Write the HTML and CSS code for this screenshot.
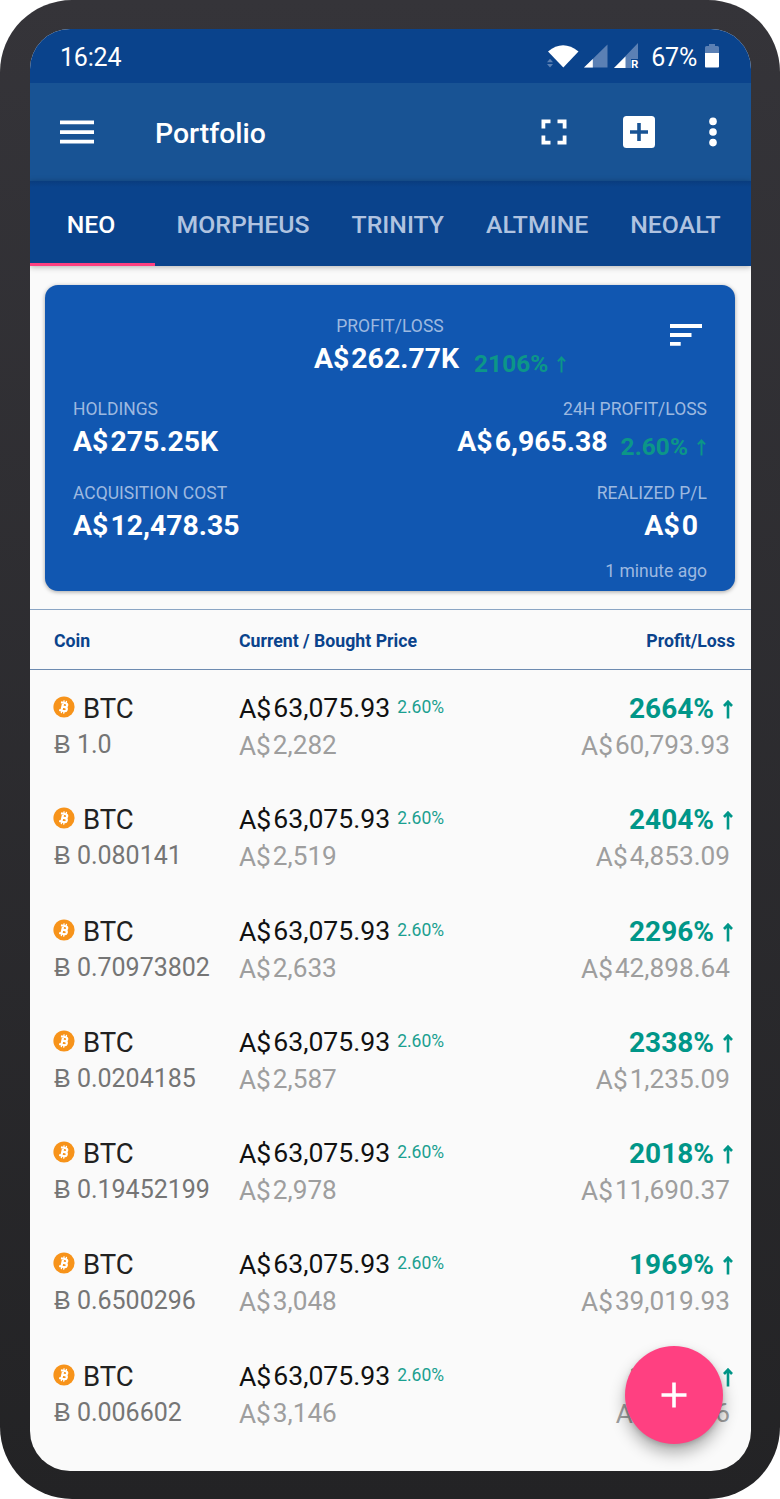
FILE: index.html
```html
<!DOCTYPE html>
<html lang="en">
<head>
<meta charset="UTF-8">
<meta name="viewport" content="width=device-width, initial-scale=1.0">
<title>Portfolio</title>
<link rel="stylesheet" href="styles.css">
</head>
<body>
<svg class="defs" width="0" height="0">
    <symbol id="btc" viewBox="0 0 22 22">
        <circle cx="11" cy="11" r="10.6" fill="#f7931a"/>
        <g transform="rotate(13 11 11)" fill="none" stroke="#fff">
            <path stroke-width="2.200" d="M7 7h4.800a1.900 1.900 0 0 1 0 3.900H9M7 15h5.200a2 2 0 0 0 0-4.100H9M9.300 7v8"/>
            <path stroke-width="1.300" d="M9.700 4.500V7M12.100 4.500V7M9.700 15v2.500M12.100 15v2.500"/>
        </g>
    </symbol>
    <symbol id="up" viewBox="0 0 10 19">
        <path d="M5 18.5V2M1 6l4-4.3L9 6" fill="none" stroke="currentColor"/>
    </symbol>
</svg>

<div class="phone">
<div class="screen">
    <div class="status">
        <span class="time">16:24</span>
        <svg class="wifi" width="32" height="24" viewBox="0 0 32 24">
            <path d="M1 7.500Q16 -5 31.500 7.500L16.300 23.500Z" fill="#fff"/>
            <path d="M0 18.200l3-3.500 3 3.500zM0 20l3 3.500L6 20z" fill="#5b80b4"/>
        </svg>
        <svg class="signal" width="24" height="26" viewBox="0 0 24 26">
            <path d="M0 24.500L23.500 1.500V24.500z" fill="#5b80b4"/>
            <path d="M0 24.500L8.800 16V24.500z" fill="#fff"/>
        </svg>
        <svg class="signal roaming" width="25" height="30" viewBox="0 -2 25 30">
            <path d="M0 25L24 0V16H17V25z" fill="#5b80b4"/>
            <path d="M0 25L11.500 13.400V25z" fill="#fff"/>
            <text x="17" y="25" font-family="Roboto" font-weight="700" font-size="11.500" fill="#fff">R</text>
        </svg>
        <span class="charge">67%</span>
        <svg class="battery" width="14" height="24" viewBox="0 0 14 24">
            <path d="M0 3.500Q0 2 1.500 2H4V0h6v2h2.500Q14 2 14 3.500V9H0z" fill="#5b80b4"/>
            <path d="M0 9h14v13.500q0 1-1 1H1q-1 0-1-1z" fill="#fff"/>
        </svg>
    </div>

    <div class="toolbar">
        <svg class="menu" width="34" height="24" viewBox="0 0 34 24" fill="#fff">
            <path d="M0 .5h34v3.700H0zM0 10.200h34v3.700H0zM0 19.800h34v3.700H0z"/>
        </svg>
        <h1>Portfolio</h1>
        <svg class="full" width="26" height="26" viewBox="0 0 26 26" fill="none" stroke="#fff" stroke-width="3.800">
            <path d="M2.400 9.500V2.400H9.500M16.500 2.400H23.600V9.500M23.600 16.500V23.600H16.500M9.500 23.600H2.400V16.500"/>
        </svg>
        <svg class="add" width="32" height="32" viewBox="0 0 32 32">
            <rect width="32" height="32" rx="3.500" fill="#fff"/>
            <path d="M16 7v18M7 16h18" stroke="#185394" stroke-width="3.600"/>
        </svg>
        <svg class="more" width="8" height="30" viewBox="0 0 8 30" fill="#fff">
            <circle cx="4" cy="4.400" r="3.800"/><circle cx="4" cy="15" r="3.800"/><circle cx="4" cy="25.600" r="3.800"/>
        </svg>
    </div>

    <div class="tabs">
        <div class="tab active">NEO</div>
        <div class="tab">MORPHEUS</div>
        <div class="tab">TRINITY</div>
        <div class="tab">ALTMINE</div>
        <div class="tab">NEOALT</div>
    </div>

    <div class="content">
        <div class="card">
            <div class="total">
                <div class="label">PROFIT/LOSS</div>
                <svg class="sort" width="32" height="22" viewBox="0 0 32 22" fill="#fff">
                    <path d="M0 0h32v4H0zM0 9h21.500v4H0zM0 18h10.700v3.700H0z"/>
                </svg>
                <div class="value"><span>A$</span>262.77K</div>
                <div class="change">2106%<svg class="up"><use href="#up"/></svg></div>
            </div>
            <div class="pair">
                <div>
                    <div class="label">HOLDINGS</div>
                    <div class="value"><span>A$</span>275.25K</div>
                </div>
                <div class="right">
                    <div class="label">24H PROFIT/LOSS</div>
                    <div class="line">
                        <div class="value"><span>A$</span>6,965.38</div>
                        <div class="change">2.60%<svg class="up"><use href="#up"/></svg></div>
                    </div>
                </div>
            </div>
            <div class="pair">
                <div>
                    <div class="label">ACQUISITION COST</div>
                    <div class="value"><span>A$</span>12,478.35</div>
                </div>
                <div class="right">
                    <div class="label">REALIZED P/L</div>
                    <div class="value realized"><span>A$</span>0</div>
                </div>
            </div>
            <div class="updated">1 minute ago</div>
        </div>

        <div class="head">
            <div>Coin</div>
            <div>Current / Bought Price</div>
            <div class="right">Profit/Loss</div>
        </div>

        <div class="row">
            <div class="coin">
                <div class="name"><svg class="btc"><use href="#btc"/></svg>BTC</div>
                <div class="amount">Ƀ 1.0</div>
            </div>
            <div class="price">
                <div class="current"><span>A$</span><b>63,075.93</b><small>2.60%</small></div>
                <div class="bought"><span>A$</span><b>2,282</b></div>
            </div>
            <div class="profit">
                <div class="percent">2664%<svg class="up"><use href="#up"/></svg></div>
                <div class="bought"><span>A$</span><b>60,793.93</b></div>
            </div>
        </div>
        <div class="row">
            <div class="coin">
                <div class="name"><svg class="btc"><use href="#btc"/></svg>BTC</div>
                <div class="amount">Ƀ 0.080141</div>
            </div>
            <div class="price">
                <div class="current"><span>A$</span><b>63,075.93</b><small>2.60%</small></div>
                <div class="bought"><span>A$</span><b>2,519</b></div>
            </div>
            <div class="profit">
                <div class="percent">2404%<svg class="up"><use href="#up"/></svg></div>
                <div class="bought"><span>A$</span><b>4,853.09</b></div>
            </div>
        </div>
        <div class="row">
            <div class="coin">
                <div class="name"><svg class="btc"><use href="#btc"/></svg>BTC</div>
                <div class="amount">Ƀ 0.70973802</div>
            </div>
            <div class="price">
                <div class="current"><span>A$</span><b>63,075.93</b><small>2.60%</small></div>
                <div class="bought"><span>A$</span><b>2,633</b></div>
            </div>
            <div class="profit">
                <div class="percent">2296%<svg class="up"><use href="#up"/></svg></div>
                <div class="bought"><span>A$</span><b>42,898.64</b></div>
            </div>
        </div>
        <div class="row">
            <div class="coin">
                <div class="name"><svg class="btc"><use href="#btc"/></svg>BTC</div>
                <div class="amount">Ƀ 0.0204185</div>
            </div>
            <div class="price">
                <div class="current"><span>A$</span><b>63,075.93</b><small>2.60%</small></div>
                <div class="bought"><span>A$</span><b>2,587</b></div>
            </div>
            <div class="profit">
                <div class="percent">2338%<svg class="up"><use href="#up"/></svg></div>
                <div class="bought"><span>A$</span><b>1,235.09</b></div>
            </div>
        </div>
        <div class="row">
            <div class="coin">
                <div class="name"><svg class="btc"><use href="#btc"/></svg>BTC</div>
                <div class="amount">Ƀ 0.19452199</div>
            </div>
            <div class="price">
                <div class="current"><span>A$</span><b>63,075.93</b><small>2.60%</small></div>
                <div class="bought"><span>A$</span><b>2,978</b></div>
            </div>
            <div class="profit">
                <div class="percent">2018%<svg class="up"><use href="#up"/></svg></div>
                <div class="bought"><span>A$</span><b>11,690.37</b></div>
            </div>
        </div>
        <div class="row">
            <div class="coin">
                <div class="name"><svg class="btc"><use href="#btc"/></svg>BTC</div>
                <div class="amount">Ƀ 0.6500296</div>
            </div>
            <div class="price">
                <div class="current"><span>A$</span><b>63,075.93</b><small>2.60%</small></div>
                <div class="bought"><span>A$</span><b>3,048</b></div>
            </div>
            <div class="profit">
                <div class="percent">1969%<svg class="up"><use href="#up"/></svg></div>
                <div class="bought"><span>A$</span><b>39,019.93</b></div>
            </div>
        </div>
        <div class="row">
            <div class="coin">
                <div class="name"><svg class="btc"><use href="#btc"/></svg>BTC</div>
                <div class="amount">Ƀ 0.006602</div>
            </div>
            <div class="price">
                <div class="current"><span>A$</span><b>63,075.93</b><small>2.60%</small></div>
                <div class="bought"><span>A$</span><b>3,146</b></div>
            </div>
            <div class="profit">
                <div class="percent">1905%<svg class="up"><use href="#up"/></svg></div>
                <div class="bought"><span>A$</span><b>395.66</b></div>
            </div>
        </div>
    </div>

    <div class="fab">
        <svg width="26" height="26" viewBox="0 0 26 26" stroke="#fff" stroke-width="3.600">
            <path d="M13 .5v25M.5 13h25"/>
        </svg>
    </div>
</div>
</div>
</body>
</html>
```
FILE: styles.css
```css
* {
    box-sizing: border-box;
}
body {
    margin: 0;
    background-color: #fff;
    font-family: Roboto, "Liberation Sans", sans-serif;
}
svg {
    display: block;
    flex: none;
}
.defs {
    position: absolute;
}
.phone {
    width: 780px;
    height: 1499px;
    padding: 29px 29px 28px 30px;
    border-radius: 72px;
    background: linear-gradient(#353439, #232325);
}
.screen {
    position: relative;
    height: 1442px;
    border-radius: 40px;
    overflow: hidden;
    background-color: #fafafa;
}

/* status bar */
.status {
    display: flex;
    align-items: center;
    height: 54px;
    padding: 0 32px 0 30px;
    background-color: #0a438c;
    color: #fff;
    font-size: 25px;
    line-height: 54px;
}
.time {
    margin-right: auto;
    padding-top: 3px;
    letter-spacing: -0.2px;
}
.signal {
    margin-left: 5px;
}
.roaming {
    margin-left: 6px;
}
.charge {
    margin: 3px 8px 0 12px;
    letter-spacing: -0.2px;
}

/* toolbar */
.toolbar {
    display: flex;
    align-items: center;
    height: 98px;
    padding: 0 34px 1px 30px;
    background-color: #185394;
    color: #fff;
}
h1 {
    margin: 4px auto 0 61px;
    font-size: 28.400px;
    font-weight: 500;
}
.add {
    margin: 0 54px 0 56px;
}

/* tabs */
.tabs {
    display: flex;
    height: 85px;
    background: linear-gradient(#093c7e, #0a438c 6px);
    box-shadow: 0 1px 6px rgba(0, 0, 0, 0.3);
    position: relative;
    color: #b0c3e0;
    font-size: 24.800px;
    font-weight: 500;
    line-height: 87px;
}
.tab {
    padding: 0 0 0 21.500px;
    margin-right: 20.500px;
    white-space: nowrap;
}
.active {
    width: 125px;
    margin-right: 0;
    padding: 0 3px 0 0;
    text-align: center;
    color: #fff;
    border-bottom: 3.500px solid #ff4081;
}

/* summary card */
.card {
    height: 306px;
    margin: 19px 16px 18px 15px;
    padding: 28px 28px 0;
    border-radius: 13px;
    background-color: #1157b1;
    box-shadow: 0 1px 4px rgba(0, 0, 0, 0.35);
    color: #fff;
}
.total {
    display: grid;
    grid-template-columns: 1fr auto 1fr;
    justify-items: center;
}
.total .label {
    grid-column: 2;
}
.total .value {
    grid-column: 2;
    margin-right: 7px;
}
.total .change {
    justify-self: start;
    margin-left: 8px;
}
.sort {
    justify-self: end;
    margin: 11px 5px -11px 0;
}
.pair {
    display: flex;
    justify-content: space-between;
    margin-top: 20.300px;
}
.right {
    text-align: right;
}
.label, .updated {
    color: #9db9e0;
    font-size: 17.500px;
    line-height: 26px;
}
.value {
    margin: 2px 0 -1px;
    font-size: 28.400px;
    font-weight: 700;
    line-height: 36px;
    white-space: nowrap;
}
.value span {
    margin-right: 2px;
}
.line {
    display: flex;
    justify-content: flex-end;
}
.change {
    display: flex;
    margin: 6px 0 -6px 13px;
    color: #0c9688;
    font-size: 24.500px;
    font-weight: 700;
    line-height: 37px;
}
.change .up {
    width: 9px;
    height: 17px;
    margin: 11px 1px 0 9px;
    stroke-width: 2.200;
}
.realized {
    margin-right: 9px;
}
.updated {
    margin-top: 15px;
    text-align: right;
}

/* coin list */
.head, .row {
    display: grid;
    grid-template-columns: 185px 1fr auto;
}
.head {
    height: 61px;
    padding: 0 16px 0 24px;
    border-top: 1.500px solid #8ba5c4;
    border-bottom: 1.500px solid #6d8bb0;
    color: #0a438c;
    font-size: 17.700px;
    font-weight: 700;
    line-height: 63px;
}
.row {
    height: 111.250px;
    padding: 20px 18px 0 24px;
    white-space: nowrap;
}
.name {
    display: flex;
    color: #212121;
    font-size: 27.500px;
    line-height: 37px;
}
.btc {
    width: 22px;
    height: 22px;
    margin: 6px 8.500px 0 -1.500px;
}
.amount {
    color: #757575;
    font-size: 25px;
    line-height: 36px;
}
.current, .bought {
    display: flex;
    color: #111;
    font-size: 26.600px;
    line-height: 37px;
}
.bought {
    margin-top: 1px;
    color: #9e9e9e;
    font-size: 26.200px;
}
.row b {
    margin: -1px 0 0 2px;
    font-weight: 400;
}
.row small {
    margin: -1px 0 0 7px;
    color: #1a9f90;
    font-size: 17.500px;
}
.profit .bought {
    justify-content: flex-end;
    margin-right: 3px;
}
.percent {
    display: flex;
    justify-content: flex-end;
    color: #009688;
    font-size: 28px;
    font-weight: 700;
    line-height: 37px;
}
.percent .up {
    width: 10px;
    height: 19px;
    margin: 10px 0 0 9px;
    stroke-width: 2.600;
}

.fab {
    position: absolute;
    right: 28px;
    bottom: 27px;
    display: flex;
    align-items: center;
    justify-content: center;
    width: 98px;
    height: 98px;
    border-radius: 50%;
    background-color: #ff4081;
    box-shadow: 0 9px 16px rgba(0, 0, 0, 0.3), 0 2px 5px rgba(0, 0, 0, 0.15);
}
```
